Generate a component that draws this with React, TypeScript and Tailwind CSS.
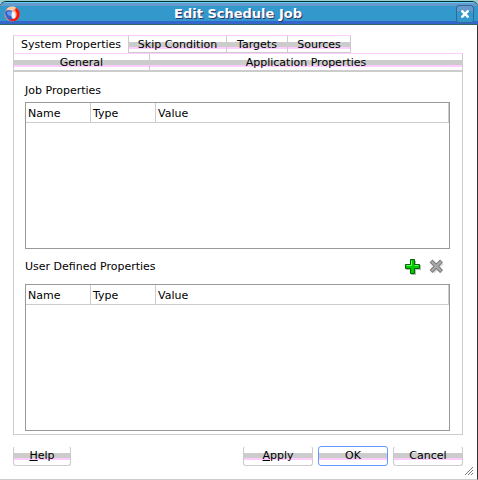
import React, { useState } from 'react';
import clsx from 'clsx';

const TABS = [
  { label: 'System Properties', width: 'w-[116px]' },
  { label: 'Skip Condition', width: 'w-[98px]' },
  { label: 'Targets', width: 'w-[61px]' },
  { label: 'Sources', width: 'w-[63px]' },
];

const SUB_TABS = [
  { label: 'General', width: 'w-[136px]' },
  { label: 'Application Properties', width: 'flex-1' },
];

// grey bar with a pink edge that runs behind tab and button labels
const BAND =
  'bg-[linear-gradient(transparent_6px,#cccccc_6px,#cccccc_11px,#ffccff_11px,#ffccff_13px,transparent_13px)]';

function AppIcon() {
  return (
    <svg className="h-4 w-4" viewBox="0 0 16 16" aria-hidden="true">
      <circle cx="8" cy="8" r="7.5" fill="#ff9977" />
      <path d="M3 3c3-3 7-3 9-1L8 5 4 6z" fill="#ffccaa" />
      <path d="M1 6c0 5 3 9 8 9.500l1-2C7 12 7 8 8 5 6 3 2 4 1 6z" fill="#3366cc" />
      <path d="M3 6c2-1 4-1 5 0l-1 4C5 10 3 9 3 6z" fill="#6699ee" />
      <path d="M12 2c5 2 5 11-1 13H8l1-2c4 0 5-6 2-9z" fill="#ff1100" />
      <path d="M4 13c2 2 4 2.500 6 2l-1-2z" fill="#cc3344" />
      <ellipse cx="9.500" cy="9" rx="2" ry="3.600" fill="#eef4ff" />
    </svg>
  );
}

function AddIcon() {
  return (
    <svg className="h-4 w-4" viewBox="0 0 16 16" aria-hidden="true">
      <path d="M6 2h5v4h5v5h-5v5H6v-5H1V6h5z" fill="#bbbbbb" />
      <path d="M5.500 .5h4v5h5v4h-5v5h-4v-5h-5v-4h5z" fill="#00cc00" stroke="#006600" />
      <path d="M6.500 6.500V1.500M1.500 6.500h5M9.500 6.500h4" fill="none" stroke="#66ff66" />
    </svg>
  );
}

function RemoveIcon() {
  return (
    <svg className="h-4 w-4" viewBox="0 0 16 16" aria-hidden="true">
      <path d="M4 4l9 9M13 4l-9 9" stroke="#dddddd" strokeWidth="4" />
      <path d="M2 2l10.500 10.500M12.500 2L2 12.500" stroke="#777777" strokeWidth="4" />
      <path d="M2.500 2.500l9.500 9.500M12 2.500L2.500 12" stroke="#aaaaaa" strokeWidth="2.200" />
    </svg>
  );
}

function PropertyTable({ label }: { label: string }) {
  return (
    <div className="flex-1 border border-[#999999] bg-white">
      <table
        aria-label={label}
        className="w-full table-fixed border-separate border-spacing-0 text-left"
      >
        <thead>
          <tr className="h-5">
            <th className="w-[65px] border-r border-b border-[#cccccc] px-0.5 pt-0.5 pb-0 font-normal">Name</th>
            <th className="w-[65px] border-r border-b border-[#cccccc] px-0.5 pt-0.5 pb-0 font-normal">Type</th>
            <th className="border-r border-b border-[#cccccc] px-0.5 pt-0.5 pb-0 font-normal">Value</th>
          </tr>
        </thead>
        <tbody />
      </table>
    </div>
  );
}

function DialogButton({
  children,
  className,
  primary,
}: {
  children: React.ReactNode;
  className: string;
  primary?: boolean;
}) {
  return (
    <button
      type="button"
      className={clsx(
        'h-5 rounded-[3px] border text-center',
        BAND,
        primary ? 'border-[#6699ff]' : 'border-[#cccccc] border-t-transparent',
        className,
      )}
    >
      {children}
    </button>
  );
}

export default function App() {
  const [tab, setTab] = useState('System Properties');

  return (
    <div className="flex min-h-screen flex-col bg-[#99cccc] font-['DejaVu_Sans',sans-serif] text-[11px] leading-4 text-black">
      <header className="mt-px flex h-6 items-center rounded-t-md border-t border-[#003333] bg-[linear-gradient(#66ccff_1px,#6699cc_1px,#6699cc_4px,#3399cc_4px,#3399cc_19px,#3366cc_19px,#3366cc_22px,#336666_22px)] px-1">
        <AppIcon />
        <h1 className="flex-1 text-center text-[13px] font-bold text-white [text-shadow:1px_1px_0_#333366]">
          Edit Schedule Job
        </h1>
        <button
          type="button"
          aria-label="Close"
          className="flex h-[18px] w-[18px] items-center justify-center rounded-[3px] border border-[#336699] bg-[#3399cc] shadow-[inset_0_5px_0_#6699cc]"
        >
          <svg className="h-2 w-2" viewBox="0 0 8 8" aria-hidden="true">
            <path d="M.5 .5l7 7M7.500 .5l-7 7" stroke="#ffffff" strokeWidth="2.400" />
          </svg>
        </button>
      </header>

      <main className="relative flex flex-1 flex-col border-r border-b border-r-[#333333] border-b-[#cccccc] bg-white pt-2.5 pr-3.5 pb-[13px] pl-[13px]">
        <div role="tablist" className="flex">
          {TABS.map(({ label, width }) => (
            <button
              key={label}
              type="button"
              role="tab"
              aria-selected={tab === label}
              onClick={() => setTab(label)}
              className={clsx(
                'h-[18px] border-t border-r border-t-[#ffccff] border-r-[#cccccc] text-center first:border-l first:border-l-[#cccccc]',
                width,
                tab !== label && ['border-b border-b-[#cccccc] pt-px', BAND],
              )}
            >
              {label}
            </button>
          ))}
        </div>

        <section className="flex flex-1 flex-col border border-[#cccccc] border-t-[#ffccff]">
          <div role="tablist" className="flex border-b-2 border-[#cccccc]">
            {SUB_TABS.map(({ label, width }) => (
              <button
                key={label}
                type="button"
                role="tab"
                className={clsx(
                  'h-4 border-r border-[#cccccc] pt-px text-center last:border-r-0',
                  BAND,
                  width,
                )}
              >
                {label}
              </button>
            ))}
          </div>

          <div className="flex flex-1 flex-col pr-3 pb-[3px] pl-[11px]">
            <h2 className="mt-[11px] mb-[3px]">Job Properties</h2>
            <PropertyTable label="Job Properties" />
            <div className="flex h-[35px] items-center gap-2 pr-[5px]">
              <h2 className="flex-1">User Defined Properties</h2>
              <button type="button" aria-label="Add property">
                <AddIcon />
              </button>
              <button type="button" aria-label="Remove property">
                <RemoveIcon />
              </button>
            </div>
            <PropertyTable label="User Defined Properties" />
          </div>
        </section>

        <footer className="mt-[11px] flex gap-[5px]">
          <DialogButton className="mr-auto w-[58px]">
            <u>H</u>elp
          </DialogButton>
          <DialogButton className="w-[70px]">
            <u>A</u>pply
          </DialogButton>
          <DialogButton className="w-[70px]" primary>
            OK
          </DialogButton>
          <DialogButton className="w-[70px]">Cancel</DialogButton>
        </footer>

        <svg className="absolute right-1 bottom-1 h-2 w-2" viewBox="0 0 8 8" aria-hidden="true">
          <path d="M0 8L8 0M3 8l5-5M6 8l2-2" stroke="#777777" />
        </svg>
      </main>
    </div>
  );
}
